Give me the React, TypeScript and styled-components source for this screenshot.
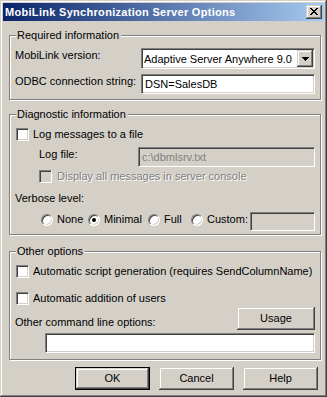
import React from 'react'
import styled, { createGlobalStyle, css } from 'styled-components'

const FACE = '#d4d0c8'

const GlobalStyle = createGlobalStyle`
  html, body {
    margin: 0;
    padding: 0;
    background: ${FACE};
  }
  body {
    font-family: "Liberation Sans", Arial, sans-serif;
    font-size: 11px;
    color: #000;
  }
`

const raised = css`
  box-shadow: inset -1px -1px 0 #404040, inset 1px 1px 0 ${FACE},
    inset -2px -2px 0 #808080, inset 2px 2px 0 #fff;
`
const sunken = css`
  border: 1px solid;
  border-color: #808080 #fff #fff #808080;
  box-shadow: inset 1px 1px 0 #404040, inset -1px -1px 0 ${FACE};
`

const Window = styled.div`
  width: 327px;
  height: 397px;
  box-sizing: border-box;
  padding: 3px;
  background: ${FACE};
  ${raised}
  display: flex;
  flex-direction: column;
`
const TitleBar = styled.div`
  height: 18px;
  flex: none;
  display: flex;
  align-items: center;
  justify-content: space-between;
  padding: 0 2px 0 2px;
  background: linear-gradient(to right, #0a246a, #a6caf0);
`
const Title = styled.span`
  color: #fff;
  font-weight: bold;
  font-size: 11px;
  letter-spacing: 0.3px;
  line-height: 18px;
`
const CloseButton = styled.div`
  width: 16px;
  height: 14px;
  box-sizing: border-box;
  background: ${FACE};
  ${raised}
  display: flex;
  align-items: center;
  justify-content: center;
  padding-bottom: 1px;
`
const Body = styled.div`
  display: flex;
  flex-direction: column;
  padding: 0 3px 0 6px;
`
const Group = styled.div<{ $top: number; $pad: string }>`
  position: relative;
  margin-top: ${p => p.$top}px;
  border: 1px solid #808080;
  box-shadow: inset 1px 1px 0 #fff, 1px 1px 0 #fff;
  padding: ${p => p.$pad};
  display: flex;
  flex-direction: column;
`
const Legend = styled.span`
  position: absolute;
  top: -7px;
  left: 6px;
  padding: 0 2px 0 1px;
  line-height: 13px;
  background: ${FACE};
`
const Row = styled.div<{ $mt?: number; $indent?: number; $align?: string }>`
  display: flex;
  align-items: ${p => p.$align || 'flex-start'};
  margin-top: ${p => p.$mt || 0}px;
  padding-left: ${p => p.$indent || 0}px;
`
const SplitRow = styled(Row)`
  justify-content: space-between;
`
const Label = styled.span<{ $w?: number; $pt?: number; $pb?: number }>`
  ${p => (p.$w ? `width: ${p.$w}px; flex: none;` : '')}
  line-height: 13px;
  padding-top: ${p => p.$pt || 0}px;
  padding-bottom: ${p => p.$pb || 0}px;
  white-space: nowrap;
`
const TextBox = styled.input<{ $w: number; $h: number }>`
  width: ${p => p.$w}px;
  height: ${p => p.$h}px;
  box-sizing: border-box;
  margin: 0;
  padding: 0 3px;
  ${sunken}
  background: #fff;
  font: 11px "Liberation Sans", Arial, sans-serif;
  color: #000;
  outline: none;
  &:disabled {
    background: ${FACE};
    color: #808080;
    -webkit-text-fill-color: #808080;
    opacity: 1;
  }
`
const Combo = styled.div<{ $w: number }>`
  width: ${p => p.$w}px;
  height: 21px;
  box-sizing: border-box;
  ${sunken}
  background: #fff;
  display: flex;
  align-items: center;
  padding-right: 1px;
`
const ComboText = styled.span`
  flex: 1;
  padding-left: 2px;
  padding-top: 1px;
  white-space: nowrap;
  overflow: hidden;
`
const DropButton = styled.span`
  width: 16px;
  height: 17px;
  box-sizing: border-box;
  background: ${FACE};
  ${raised}
  display: flex;
  align-items: center;
  justify-content: center;
`
const CheckRow = styled.label<{ $mt?: number; $indent?: number; $disabled?: boolean }>`
  display: flex;
  align-items: center;
  gap: 4px;
  height: 13px;
  margin-top: ${p => p.$mt || 0}px;
  margin-left: ${p => 1 + (p.$indent || 0)}px;
  line-height: 13px;
  white-space: nowrap;
  ${p =>
    p.$disabled &&
    css`
      gap: 5px;
      color: #808080;
      text-shadow: 1px 1px 0 #fff;
    `}
`
const CheckBox = styled.span<{ $disabled?: boolean }>`
  width: 13px;
  height: 13px;
  flex: none;
  box-sizing: border-box;
  ${sunken}
  background: ${p => (p.$disabled ? FACE : '#fff')};
`
const RadioOption = styled.label<{ $w: number }>`
  width: ${p => p.$w}px;
  flex: none;
  display: flex;
  align-items: center;
  gap: 4px;
  height: 13px;
  margin-top: 1px;
  line-height: 13px;
  white-space: nowrap;
`
const Radio = styled.span<{ $checked?: boolean }>`
  position: relative;
  width: 12px;
  height: 12px;
  flex: none;
  box-sizing: border-box;
  border-radius: 50%;
  border: 1px solid;
  border-color: #808080 #fff #fff #808080;
  box-shadow: inset 1px 1px 0 #404040, inset -1px -1px 0 ${FACE};
  background: #fff;
  ${p =>
    p.$checked &&
    css`
      &::after {
        content: '';
        position: absolute;
        left: 3px;
        top: 3px;
        width: 4px;
        height: 4px;
        border-radius: 50%;
        background: #000;
      }
    `}
`
const PushButton = styled.button<{ $w: number; $default?: boolean }>`
  width: ${p => p.$w}px;
  height: 23px;
  flex: none;
  box-sizing: border-box;
  margin: 0;
  padding: 0 0 1px;
  border: none;
  background: ${FACE};
  font: 11px "Liberation Sans", Arial, sans-serif;
  color: #000;
  ${raised}
  ${p =>
    p.$default &&
    css`
      border: 1px solid #000;
    `}
`
const ButtonRow = styled.div`
  display: flex;
  justify-content: flex-end;
  gap: 9px;
  margin-top: 7px;
  padding-right: 3px;
`

function CloseGlyph() {
  return (
    <svg width="8" height="7" viewBox="0 0 8 7" shapeRendering="crispEdges">
      <path
        fill="#000"
        d="M0 0h2v1h-2z M6 0h2v1h-2z M1 1h2v1h-2z M5 1h2v1h-2z M2 2h4v1h-4z M3 3h2v1h-2z M2 4h4v1h-4z M1 5h2v1h-2z M5 5h2v1h-2z M0 6h2v1h-2z M6 6h2v1h-2z"
      />
    </svg>
  )
}

function DownArrow() {
  return (
    <svg width="7" height="4" viewBox="0 0 7 4" shapeRendering="crispEdges">
      <path fill="#000" d="M0 0h7v1h-7z M1 1h5v1h-5z M2 2h3v1h-3z M3 3h1v1h-1z" />
    </svg>
  )
}

export default function App() {
  return (
    <>
      <GlobalStyle />
      <Window>
        <TitleBar>
          <Title>MobiLink Synchronization Server Options</Title>
          <CloseButton>
            <CloseGlyph />
          </CloseButton>
        </TitleBar>
        <Body>
          <Group $top={14} $pad="12px 5px 5px 5px">
            <Legend>Required information</Legend>
            <Row>
              <Label $w={126} $pt={1}>MobiLink version:</Label>
              <Combo $w={174}>
                <ComboText>Adaptive Server Anywhere 9.0</ComboText>
                <DropButton>
                  <DownArrow />
                </DropButton>
              </Combo>
            </Row>
            <Row $mt={5}>
              <Label $w={126} $pt={1}>ODBC connection string:</Label>
              <TextBox $w={174} $h={20} readOnly defaultValue="DSN=SalesDB" />
            </Row>
          </Group>

          <Group $top={14} $pad="13px 5px 3px 5px">
            <Legend>Diagnostic information</Legend>
            <CheckRow>
              <CheckBox />
              Log messages to a file
            </CheckRow>
            <Row $mt={6} $indent={24}>
              <Label $w={99} $pt={1}>Log file:</Label>
              <TextBox $w={177} $h={20} disabled defaultValue="c:\dbmlsrv.txt" />
            </Row>
            <CheckRow $mt={3} $indent={23} $disabled>
              <CheckBox $disabled />
              Display all messages in server console
            </CheckRow>
            <Row $mt={9}>
              <Label>Verbose level:</Label>
            </Row>
            <Row $mt={7} $indent={26}>
              <RadioOption $w={47}>
                <Radio />
                None
              </RadioOption>
              <RadioOption $w={60}>
                <Radio $checked />
                Minimal
              </RadioOption>
              <RadioOption $w={43}>
                <Radio />
                Full
              </RadioOption>
              <RadioOption $w={59}>
                <Radio />
                Custom:
              </RadioOption>
              <TextBox $w={65} $h={19} disabled defaultValue="" />
            </Row>
          </Group>

          <Group $top={16} $pad="13px 5px 6px 5px">
            <Legend>Other options</Legend>
            <CheckRow>
              <CheckBox />
              Automatic script generation (requires SendColumnName)
            </CheckRow>
            <CheckRow $mt={14}>
              <CheckBox />
              Automatic addition of users
            </CheckRow>
            <SplitRow $mt={2} $align="flex-end">
              <Label $pb={1}>Other command line options:</Label>
              <PushButton $w={78}>Usage</PushButton>
            </SplitRow>
            <Row $mt={3} $indent={30}>
              <TextBox $w={270} $h={20} readOnly defaultValue="" />
            </Row>
          </Group>

          <ButtonRow>
            <PushButton $w={75} $default>
              OK
            </PushButton>
            <PushButton $w={75}>Cancel</PushButton>
            <PushButton $w={75}>Help</PushButton>
          </ButtonRow>
        </Body>
      </Window>
    </>
  )
}
